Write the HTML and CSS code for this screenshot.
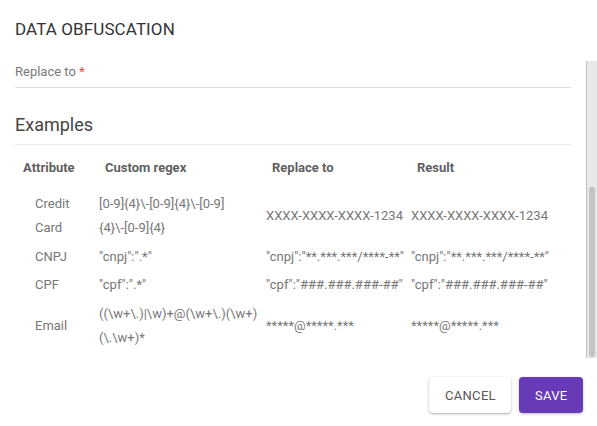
FILE: index.html
```html
<!DOCTYPE html>
<html>
<head>
<meta charset="utf-8">
<link rel="stylesheet" href="styles.css">
</head>
<body>
<div class="dialog">
  <h1 class="title">DATA OBFUSCATION</h1>
  <div class="content">
    <div class="field">
      <label class="field-label">Replace to <span class="req">*</span></label>
    </div>
    <h2 class="section">Examples</h2>
    <div class="table">
      <div class="row head">
        <div class="c1">Attribute</div>
        <div class="c2">Custom regex</div>
        <div class="c3">Replace to</div>
        <div class="c4">Result</div>
      </div>
      <div class="row double">
        <div class="c1">Credit<br>Card</div>
        <div class="c2">[0-9]{4}\-[0-9]{4}\-[0-9]<br>{4}\-[0-9]{4}</div>
        <div class="c3">XXXX-XXXX-XXXX-1234</div>
        <div class="c4">XXXX-XXXX-XXXX-1234</div>
      </div>
      <div class="row">
        <div class="c1">CNPJ</div>
        <div class="c2">"cnpj":".*"</div>
        <div class="c3">"cnpj":"**.***.***/****-**"</div>
        <div class="c4">"cnpj":"**.***.***/****-**"</div>
      </div>
      <div class="row">
        <div class="c1">CPF</div>
        <div class="c2">"cpf":".*"</div>
        <div class="c3">"cpf":"###.###.###-##"</div>
        <div class="c4">"cpf":"###.###.###-##"</div>
      </div>
      <div class="row double">
        <div class="c1">Email</div>
        <div class="c2">((\w+\.)|\w)+@(\w+\.)(\w+)<br>(\.\w+)*</div>
        <div class="c3">*****@*****.***</div>
        <div class="c4">*****@*****.***</div>
      </div>
    </div>
  </div>
  <div class="actions">
    <button class="btn cancel">CANCEL</button>
    <button class="btn save">SAVE</button>
  </div>
  <div class="scrollbar"><div class="thumb"></div></div>
</div>
</body>
</html>
```
FILE: styles.css
```css
* { box-sizing: border-box; }
html, body { margin: 0; padding: 0; background: #fff; }
body {
  font-family: Roboto, "Liberation Sans", sans-serif;
  width: 597px;
  height: 426px;
  overflow: hidden;
}
.dialog {
  position: relative;
  height: 426px;
  padding: 0 14px 0 15px;
}
.title {
  margin: 0;
  padding-top: 19px;
  height: 61px;
  font-size: 17px;
  font-weight: 400;
  line-height: 20px;
  color: #333;
  letter-spacing: 0.1px;
}
.content {
  height: 297px;
}
.field {
  height: 27px;
  border-bottom: 1px solid #dcdcdc;
  margin-right: 12px;
}
.field-label {
  display: block;
  padding-top: 2px;
  font-size: 13px;
  line-height: 18px;
  color: #7a7a7a;
}
.req { color: #f44336; }
.section {
  margin: 0;
  padding-top: 27px;
  height: 57px;
  font-size: 18px;
  font-weight: 400;
  line-height: 20px;
  color: #444;
  border-bottom: 1px solid #ececec;
  margin-right: 12px;
}
.table {
  font-size: 13px;
  color: #777;
}
.row {
  display: grid;
  grid-template-columns: 84px 167px 145px 1fr;
  align-items: center;
  line-height: 24px;
  padding: 2px 0;
}
.row.double { padding: 3px 0; }
.row .c1 { padding-left: 20px; }
.head {
  height: 44px;
  padding: 2px 0 0;
  font-weight: 700;
  color: #5f5f5f;
}
.head .c1 { padding-left: 8px; }
.head .c2, .head .c3, .head .c4 { padding-left: 6px; }
.scrollbar {
  position: absolute;
  left: 586px;
  top: 61px;
  width: 11px;
  height: 297px;
  background: #e8e8e8;
  border-left: 1px solid #bfbfbf;
}
.thumb {
  position: absolute;
  left: 2px;
  top: 126px;
  width: 6px;
  height: 170px;
  border-radius: 3px;
  background: #c4c4c4;
}
.actions {
  display: flex;
  justify-content: flex-end;
  gap: 8px;
  padding-top: 19px;
}
.btn {
  height: 36px;
  border: none;
  border-radius: 4px;
  font-family: Roboto, "Liberation Sans", sans-serif;
  font-size: 13px;
  letter-spacing: 0.3px;
  padding: 0 16px;
  cursor: pointer;
}
.cancel {
  width: 82px;
  background: #fff;
  color: #555;
  box-shadow: 0 1px 3px rgba(0,0,0,0.25), 0 1px 1px rgba(0,0,0,0.08);
}
.save {
  width: 64px;
  background: #673ab7;
  color: #fff;
  box-shadow: 0 1px 3px rgba(0,0,0,0.25);
}
```
